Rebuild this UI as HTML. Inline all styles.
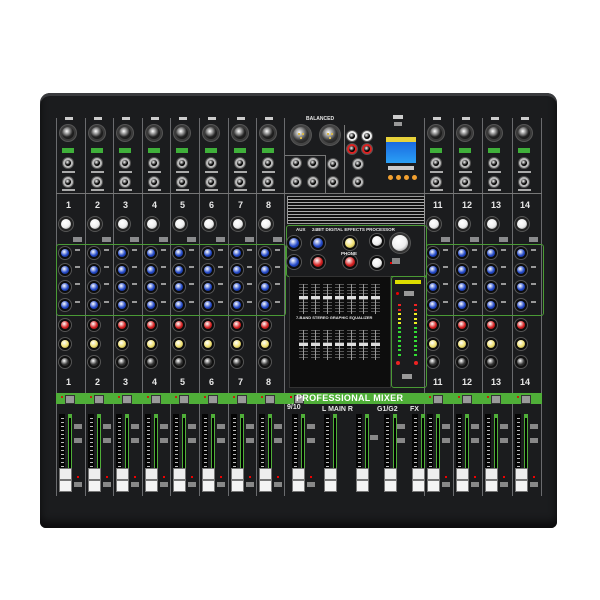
<!DOCTYPE html>
<html><head><meta charset="utf-8">
<style>
body{margin:0;background:#fff;width:600px;height:600px;overflow:hidden;font-family:"Liberation Sans",sans-serif;}
#m{position:absolute;left:40px;top:93px;width:517px;height:435px;background:#1b1c1e;border-radius:10px 10px 6px 6px;box-shadow:inset 0 3px 0 #3a3b3e, inset 0 -6px 8px #0b0b0c;}
.a{position:absolute;}
.t{position:absolute;color:#e8e8e8;font-weight:bold;white-space:nowrap;}
</style></head><body>
<div id="m"></div>
<div id="c"></div>
<div class="t" style="left:59px;top:200px;font-size:9px">
</div>
<div class="t" style="left:306px;top:116px;font-size:5px">BALANCED</div>
<div class="t" style="left:296px;top:315px;font-size:4px">7-BAND STEREO GRAPHIC EQUALIZER</div>
<div class="t" style="left:312px;top:227px;font-size:4.5px">24BIT DIGITAL EFFECTS PROCESSOR</div>
<div class="t" style="left:296px;top:227px;font-size:4.5px">AUX</div>
<div class="t" style="left:341px;top:251px;font-size:4.5px">PHONE</div>
<div class="t" style="left:296px;top:393px;font-size:9px;color:#fff;letter-spacing:0.3px">PROFESSIONAL MIXER</div>
<div class="t" style="left:287px;top:404px;font-size:7px">9/10</div>
<div class="t" style="left:322px;top:406px;font-size:7px">L MAIN R</div>
<div class="t" style="left:377px;top:406px;font-size:7px">G1/G2</div>
<div class="t" style="left:410px;top:406px;font-size:7px">FX</div>
<div id="nums"></div>
<script>
var c=document.getElementById('c'),h='';
function r(x,y,w,hh,s){h+='<div class="a" style="left:'+x+'px;top:'+y+'px;width:'+w+'px;height:'+hh+'px;'+s+'"></div>';}
function k(x,y,rad,col,ring){r(x-rad-2,y-rad-2,2*rad+4,2*rad+4,'border-radius:50%;background:'+(ring||'#0c0c0c')+';box-shadow:0 0 0 1px #555');r(x-rad,y-rad,2*rad,2*rad,'border-radius:50%;background:radial-gradient(circle at 40% 35%,#fff 0,'+col+' 55%,#000 130%)');}
var xs=[];for(var i=0;i<8;i++)xs.push(56+28.6*i);for(var j=0;j<4;j++)xs.push(424+29.2*j);
// divider lines
xs.forEach(function(x){r(x,118,1,378,'background:#6a6b6e');});
r(284,118,1,378,'background:#6a6b6e');r(541,118,1,378,'background:#6a6b6e');
r(56,193,486,1,'background:#777');
// EQ green boxes
r(56,244,228,70,'border:1px solid #4a9a35;border-radius:3px');
r(426,244,116,70,'border:1px solid #4a9a35;border-radius:3px');
// green strip
r(56,393,486,11,'background:#4fae38');
xs.forEach(function(x,idx){
 var cx=x+12;
 r(cx-3,117,8,3,'background:#ccc');
 k(cx,133,6,'#222','#3a3a3a');
 r(cx-6,148,12,5,'background:#3fb03a');
 k(cx,163,3,'#000','#bbb');r(cx-6,171,13,2,'background:#aaa');
 k(cx,182,3,'#000','#bbb');r(cx-6,189,13,2,'background:#aaa');
 k(x+10,224,5,'#eee','#222');
 r(x+17,237,9,5,'background:#8a8b8d');
 [253,270,287,305].forEach(function(y){k(x+9,y,4,'#2248c8');r(x+19,y-4,5,2,'background:#999');});
 k(x+9,325,4,'#d52020');k(x+9,344,4,'#f0e070');k(x+9,362,4,'#333','#111');
 r(x+5,396,2,2,'background:#d00;border-radius:50%');
 r(x+9,395,8,7,'background:#999;border:1px solid #333');
 // fader
 r(x+3,414,6,78,'background:#050505');
 r(x+5,418,3,60,'background:repeating-linear-gradient(#bbb 0 1px,#050505 1px 4px)');
 r(x+12,414,4,60,'background:#4fae38');
 r(x+13,418,2,70,'background:#000');
 r(x+3,468,11,10,'background:#eee;border:1px solid #777');
 r(x+3,480,11,10,'background:#f4f4f4;border:1px solid #777');
 r(x+18,424,8,5,'background:#888');r(x+18,438,8,5,'background:#888');
 r(x+21,476,2,2,'background:#e00');
 r(x+18,482,8,5,'background:#888');
});
// center top
k(301,135,8,'#333','#444');k(330,135,8,'#333','#444');
[[301,135],[330,135]].forEach(function(p){r(p[0]-3,p[1]-2,2,2,'background:#d8b84a');r(p[0]+1,p[1]-2,2,2,'background:#d8b84a');r(p[0]-1,p[1]+2,2,2,'background:#d8b84a');});
k(296,163,3,'#000','#bbb');k(313,163,3,'#000','#bbb');k(296,182,3,'#000','#bbb');k(313,182,3,'#000','#bbb');
k(352,136,3,'#000','#eee');k(367,136,3,'#000','#eee');k(352,149,3,'#000','#d22');k(367,149,3,'#000','#d22');
k(333,164,3,'#000','#bbb');k(358,164,3,'#000','#bbb');k(333,182,3,'#000','#bbb');k(358,182,3,'#000','#bbb');
r(285,155,40,1,'background:#777');r(325,155,1,38,'background:#777');r(344,125,1,68,'background:#777');
r(393,115,10,4,'background:#ccc');r(394,122,8,4,'background:#999');
r(386,137,30,5,'background:#e8d23a');
r(386,142,30,21,'background:linear-gradient(#1a6ae0,#2aa0f5)');
r(388,166,26,4,'background:#ccc');
[388,396,404,412].forEach(function(x){r(x,175,5,5,'background:#f2a030;border-radius:50%');});
r(287,196,136,26,'border:1px solid #999;background:repeating-linear-gradient(#111 0 2px,#aaa 2px 3px)');
r(286,225,139,50,'border:1px solid #4a9a35;border-radius:3px');
k(294,243,5,'#2248c8');k(294,262,5,'#2248c8');k(318,243,5,'#2248c8');k(318,262,5,'#d52020');
k(350,243,5,'#f0e070');k(350,262,5,'#d52020');k(377,241,5,'#eee');k(377,263,5,'#eee');
k(400,243,8,'#eee','#333');
r(392,258,8,6,'background:#888');r(390,262,2,2,'background:#e00');
// graphic EQ
r(289,276,100,110,'background:#0d0d0d;border:1px solid #333');
for(var b=0;b<7;b++){var gx=299+b*12;
 r(gx,284,9,30,'background:repeating-linear-gradient(#555 0 1px,#0d0d0d 1px 3px)');r(gx+4,284,1,30,'background:#999');r(gx,296,9,3,'background:#ddd');
 r(gx,330,9,30,'background:repeating-linear-gradient(#555 0 1px,#0d0d0d 1px 3px)');r(gx+4,330,1,30,'background:#999');r(gx,343,9,3,'background:#ddd');}
r(391,276,34,110,'border:1px solid #4a9a35;border-radius:3px');
r(395,280,26,4,'background:#dd0');r(396,292,3,3,'background:#e00;border-radius:50%');r(404,291,10,5,'background:#999');
for(var l=0;l<12;l++){var col=l<2?'#e22':(l<5?'#ee2':'#3d3');r(398,304+l*4.5,3,2,'background:'+col);r(414,304+l*4.5,3,2,'background:'+col);}
r(396,361,4,4,'background:#e22;border-radius:50%');r(414,361,4,4,'background:#e22;border-radius:50%');
r(402,374,10,5,'background:#999');
// center faders
[[289,'9'],[321,'L'],[353,'R'],[381,'G'],[409,'F']].forEach(function(f){var x=f[0];
 r(x+3,414,6,78,'background:#050505');r(x+5,418,3,60,'background:repeating-linear-gradient(#bbb 0 1px,#050505 1px 4px)');
 r(x+12,414,4,60,'background:#4fae38');r(x+13,418,2,70,'background:#000');
 r(x+3,468,11,10,'background:#eee;border:1px solid #777');r(x+3,480,11,10,'background:#f4f4f4;border:1px solid #777');});
r(307,424,8,5,'background:#888');r(307,438,8,5,'background:#888');r(310,476,2,2,'background:#e00');r(307,482,8,5,'background:#888');
r(370,435,8,5,'background:#888');r(397,424,8,5,'background:#888');r(397,438,8,5,'background:#888');
r(290,396,2,2,'background:#d00');r(294,395,8,7,'background:#999;border:1px solid #333');
c.innerHTML=h;
</script>
<div class="t" style="left:66px;top:200px;font-size:9px">1</div>
<div class="t" style="left:95px;top:200px;font-size:9px">2</div>
<div class="t" style="left:123px;top:200px;font-size:9px">3</div>
<div class="t" style="left:152px;top:200px;font-size:9px">4</div>
<div class="t" style="left:180px;top:200px;font-size:9px">5</div>
<div class="t" style="left:209px;top:200px;font-size:9px">6</div>
<div class="t" style="left:238px;top:200px;font-size:9px">7</div>
<div class="t" style="left:266px;top:200px;font-size:9px">8</div>
<div class="t" style="left:433px;top:200px;font-size:9px">11</div>
<div class="t" style="left:462px;top:200px;font-size:9px">12</div>
<div class="t" style="left:491px;top:200px;font-size:9px">13</div>
<div class="t" style="left:520px;top:200px;font-size:9px">14</div>
<div class="t" style="left:66px;top:377px;font-size:9px">1</div>
<div class="t" style="left:95px;top:377px;font-size:9px">2</div>
<div class="t" style="left:123px;top:377px;font-size:9px">3</div>
<div class="t" style="left:152px;top:377px;font-size:9px">4</div>
<div class="t" style="left:180px;top:377px;font-size:9px">5</div>
<div class="t" style="left:209px;top:377px;font-size:9px">6</div>
<div class="t" style="left:238px;top:377px;font-size:9px">7</div>
<div class="t" style="left:266px;top:377px;font-size:9px">8</div>
<div class="t" style="left:433px;top:377px;font-size:9px">11</div>
<div class="t" style="left:462px;top:377px;font-size:9px">12</div>
<div class="t" style="left:491px;top:377px;font-size:9px">13</div>
<div class="t" style="left:520px;top:377px;font-size:9px">14</div>
</body></html>
